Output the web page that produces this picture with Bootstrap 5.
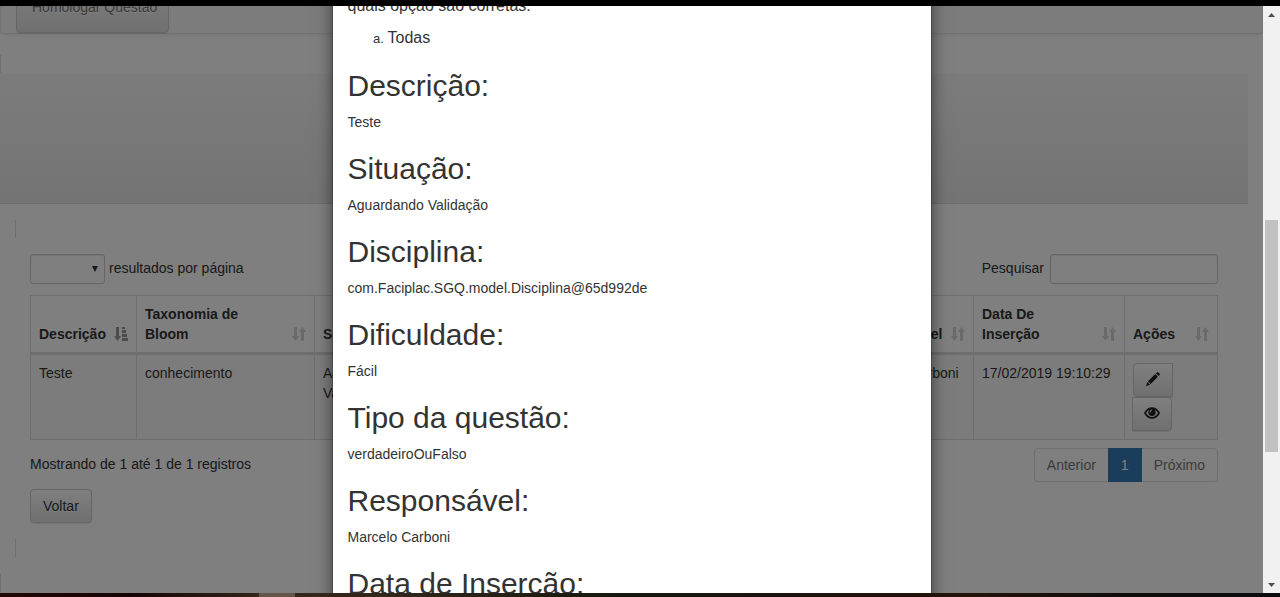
<!DOCTYPE html>
<html lang="pt-BR">
<head>
<meta charset="utf-8">
<meta name="viewport" content="width=device-width, initial-scale=1">
<title>Homologar Questão</title>
<link href="https://cdn.jsdelivr.net/npm/bootstrap@5.3.0/dist/css/bootstrap.min.css" rel="stylesheet">
<style>
  body { font-family: "Liberation Sans", Arial, sans-serif; font-size: 14px; line-height: 20px; color: #333; background: #000; }
  .top-strip { height: 6px; background: #000; }
  .bottom-strip { height: 4px; background: linear-gradient(90deg, #240606, #160404 10%, #33241a 20%, #33261a 30%, #17190f 48%, #1c1210 60%, #241309 76%, #100c0c 88%, #0c0c0e); }
  .strip-item { width: 36px; margin-left: 259px; background: #66564a; }
  .stage { background: #fff; min-width: 0; }

  .top-nav { height: 28px; padding-left: 15px; background: #f9f9f9; border: 1px solid #e7e7e7; border-top: 0; border-radius: 0 0 4px 4px; box-shadow: 0 1px 5px rgba(0,0,0,.08); }
  .btn-soft { --bs-btn-color: #333; --bs-btn-border-color: #ccc; --bs-btn-border-radius: 4px; --bs-btn-font-size: 14px; --bs-btn-line-height: 20px; --bs-btn-padding-x: 12px; --bs-btn-padding-y: 6px; background: linear-gradient(#fff, #e0e0e0); box-shadow: inset 0 1px 0 rgba(255,255,255,.15), 0 1px 1px rgba(0,0,0,.1); text-shadow: 0 1px 0 #fff; }
  .nav-btn { --bs-btn-color: #777; padding: 15px 11px 15px 15px; flex: none; }
  .stub { width: 1px; height: 18px; background: #ddd; }
  .stub-first { margin-top: 21px; }
  .banner { height: 131px; margin-right: 15px; background: linear-gradient(#f8f8f8, #e8e8e8); border-bottom: 1px solid #dcdcdc; }
  .inner { padding: 16px 45px 17px 15px; }
  .panel-area { padding: 16px 0 16px 15px; }

  .field { height: 30px; font-size: 12px; border: 1px solid #ccc; border-radius: 3px; background-color: #fff; box-shadow: inset 0 1px 1px rgba(0,0,0,.075); }
  .size-select { width: 75px; appearance: none; background: #fff url("data:image/svg+xml,%3Csvg xmlns='http://www.w3.org/2000/svg' width='6' height='6'%3E%3Cpath d='M0 0h6L3 6z' fill='%23333'/%3E%3C/svg%3E") no-repeat right 6px center; }
  .search-input { width: 168px; padding: 5px 10px; }
  .tool-row label { padding-bottom: 2px; }
  .search-group { gap: 6px; }

  .grid-table { table-layout: fixed; margin: 11px 0 8px; color: #333; border-color: #ddd; --bs-table-color: #333; }
  .grid-table th, .grid-table td { padding: 8px; border: 1px solid #ddd; }
  .grid-table th { position: relative; padding-right: 30px; vertical-align: bottom; border-bottom-width: 3px; }
  .grid-table tbody td { background: #f9f9f9; }
  .grid-table th svg { position: absolute; right: 8px; bottom: 11px; opacity: .2; fill: #333; }
  .grid-table th.sorted svg { opacity: .5; }
  .c-desc { width: 106px; } .c-tax { width: 178px; } .c-sit { width: 130px; } .c-dif { width: 150px; }
  .c-resp { width: 126px; } .c-data { width: 151px; } .c-acao { width: 93px; }
  .btn-icon { width: 40px; height: 34px; line-height: 0; padding: 0 0 2px; }
  .btn-a { border-radius: 4px 0 0 4px; }
  .btn-b { border-radius: 0 4px 4px 0; margin-left: -1px; }

  .pager { --bs-pagination-font-size: 14px; --bs-pagination-padding-x: 12px; --bs-pagination-padding-y: 6px; --bs-pagination-color: #777; --bs-pagination-disabled-color: #777; --bs-pagination-disabled-bg: #fff; --bs-pagination-border-color: #ddd; --bs-pagination-disabled-border-color: #ddd; --bs-pagination-border-radius: 4px; --bs-pagination-active-bg: #337ab7; --bs-pagination-active-border-color: #337ab7; }
  .info { padding-top: 6px; }
  .back-btn { margin-top: 7px; }

  .shade { z-index: 10; background: rgba(0,0,0,.5); }
  .dialog-box { width: 600px; max-width: 100%; margin: -28px auto 0; padding: 15px; background: #fff; border: 1px solid rgba(0,0,0,.2); background-clip: padding-box; box-shadow: 0 5px 15px rgba(0,0,0,.5); }
  .dialog-box h2 { font-size: 30px; line-height: 33px; font-weight: 400; margin: 20px 0 10px; }
  .dialog-box p { margin: 0; }
  .dialog-box .question { font-size: 16px; line-height: 23px; margin-bottom: 10px; }
  .dialog-box ol { padding-left: 40px; margin: 0; line-height: 22px; }
  .dialog-box li::marker { font-size: 13px; }
  .dialog-box li span { font-size: 16px; }

  .scroll-col { width: 17px; background: #f1f1f1; }
  .scroll-end { height: 17px; }
  .thumb { flex: 232 0 0; margin: 0 2px; background: #c1c1c1; }
  .gap-top { flex: 197 0 0; } .gap-bottom { flex: 124 0 0; }
</style>
</head>
<body class="d-flex flex-column vh-100 overflow-hidden">
<svg class="d-none" aria-hidden="true">
  <symbol id="sort" viewBox="0 0 14 14"><path d="M2 0h3v9h2l-3.500 5L0 9h2zM9 14h3V5h2l-3.500-5L7 5h2z"/></symbol>
  <symbol id="sort-asc" viewBox="0 0 14 14"><path d="M2 0h3v9h2l-3.500 5L0 9h2zM8 0h3v2H8zM8 3h4v3H8zM8 7h5v3H8zM8 11h6v3H8z"/></symbol>
</svg>
<div class="top-strip flex-shrink-0"></div>
<div class="d-flex flex-grow-1 overflow-hidden">
  <div class="stage flex-grow-1 position-relative overflow-hidden">
    <nav class="top-nav d-flex align-items-end"><button type="button" class="btn btn-soft nav-btn">Homologar Questão</button></nav>
    <div class="stub stub-first"></div>
    <div class="banner"></div>
    <main class="inner">
      <div class="stub"></div>
      <div class="panel-area">
        <div class="tool-row d-flex justify-content-between">
          <div class="d-flex align-items-center gap-1">
            <select id="size" class="field size-select"></select>
            <label for="size">resultados por página</label>
          </div>
          <div class="search-group d-flex align-items-center">
            <label for="search">Pesquisar</label>
            <input id="search" type="search" class="field search-input">
          </div>
        </div>
        <table class="table grid-table">
          <colgroup><col class="c-desc"><col class="c-tax"><col class="c-sit"><col class="c-dif"><col><col class="c-resp"><col class="c-data"><col class="c-acao"></colgroup>
          <thead>
            <tr>
              <th class="sorted">Descrição<svg width="14" height="14"><use href="#sort-asc"/></svg></th>
              <th>Taxonomia de Bloom<svg width="14" height="14"><use href="#sort"/></svg></th>
              <th>Situação<svg width="14" height="14"><use href="#sort"/></svg></th>
              <th>Dificuldade<svg width="14" height="14"><use href="#sort"/></svg></th>
              <th>Tipo da questão<svg width="14" height="14"><use href="#sort"/></svg></th>
              <th>Responsável<svg width="14" height="14"><use href="#sort"/></svg></th>
              <th>Data De Inserção<svg width="14" height="14"><use href="#sort"/></svg></th>
              <th>Ações<svg width="14" height="14"><use href="#sort"/></svg></th>
            </tr>
          </thead>
          <tbody>
            <tr>
              <td>Teste</td><td>conhecimento</td><td>Aguardando Validação</td><td>Fácil</td><td>verdadeiroOuFalso</td><td class="text-nowrap">Marcelo Carboni</td><td>17/02/2019 19:10:29</td>
              <td>
                <div class="d-flex flex-column">
                  <button type="button" class="btn btn-soft btn-icon btn-a" aria-label="Editar"><svg width="14" height="14" viewBox="0 0 14 14" fill="#222"><path d="M0 14l1.200-3.800 1 .4 1.300 1.300.3 1zM2 9.300L9.200 2.100l2.700 2.700-7.200 7.200zM10 1.400l.9-.9c.5-.5 1-.5 1.500 0l1.100 1.100c.5.500.5 1 0 1.500l-.9.900z"/></svg></button>
                  <button type="button" class="btn btn-soft btn-icon btn-b" aria-label="Visualizar"><svg width="16" height="14" viewBox="0 0 16 14"><path d="M1 7c1.800-3.300 4.200-4.900 7-4.900S13.200 3.700 15 7c-1.800 3.300-4.200 4.900-7 4.900S2.800 10.300 1 7z" fill="none" stroke="#222" stroke-width="1.700"/><circle cx="8" cy="6.200" r="3.700" fill="#222"/><path d="M6 6.500C6 5 6.800 4.200 8 4" fill="none" stroke="#f2f2f2" stroke-width="1.200"/></svg></button>
                </div>
              </td>
            </tr>
          </tbody>
        </table>
        <div class="d-flex justify-content-between">
          <div class="info">Mostrando de 1 até 1 de 1 registros</div>
          <ul class="pagination pager mb-0">
            <li class="page-item disabled"><a class="page-link" href="#">Anterior</a></li>
            <li class="page-item active"><a class="page-link" href="#">1</a></li>
            <li class="page-item disabled"><a class="page-link" href="#">Próximo</a></li>
          </ul>
        </div>
        <button type="button" class="btn btn-soft back-btn">Voltar</button>
      </div>
      <div class="stub"></div>
    </main>
    <div class="stub"></div>

    <div class="shade position-absolute top-0 start-0 w-100 h-100 overflow-hidden">
      <div class="dialog-box" role="dialog" aria-label="Questão">
        <p class="question">quais opção são corretas:</p>
        <ol type="a"><li><span>Todas</span></li></ol>
        <h2>Descrição:</h2><p>Teste</p>
        <h2>Situação:</h2><p>Aguardando Validação</p>
        <h2>Disciplina:</h2><p>com.Faciplac.SGQ.model.Disciplina@65d992de</p>
        <h2>Dificuldade:</h2><p>Fácil</p>
        <h2>Tipo da questão:</h2><p>verdadeiroOuFalso</p>
        <h2>Responsável:</h2><p>Marcelo Carboni</p>
        <h2>Data de Inserção:</h2>
      </div>
    </div>
  </div>
  <div class="scroll-col d-flex flex-column flex-shrink-0" aria-hidden="true">
    <div class="scroll-end d-flex align-items-center justify-content-center"><svg width="7" height="4"><path d="M0 4h7L3.500 0z" fill="#505050"/></svg></div>
    <div class="gap-top"></div><div class="thumb"></div><div class="gap-bottom"></div>
    <div class="scroll-end d-flex align-items-center justify-content-center"><svg width="7" height="4"><path d="M0 0h7L3.500 4z" fill="#505050"/></svg></div>
  </div>
</div>
<div class="bottom-strip d-flex flex-shrink-0"><div class="strip-item"></div></div>
<script src="https://cdn.jsdelivr.net/npm/bootstrap@5.3.0/dist/js/bootstrap.bundle.min.js"></script>
</body>
</html>
